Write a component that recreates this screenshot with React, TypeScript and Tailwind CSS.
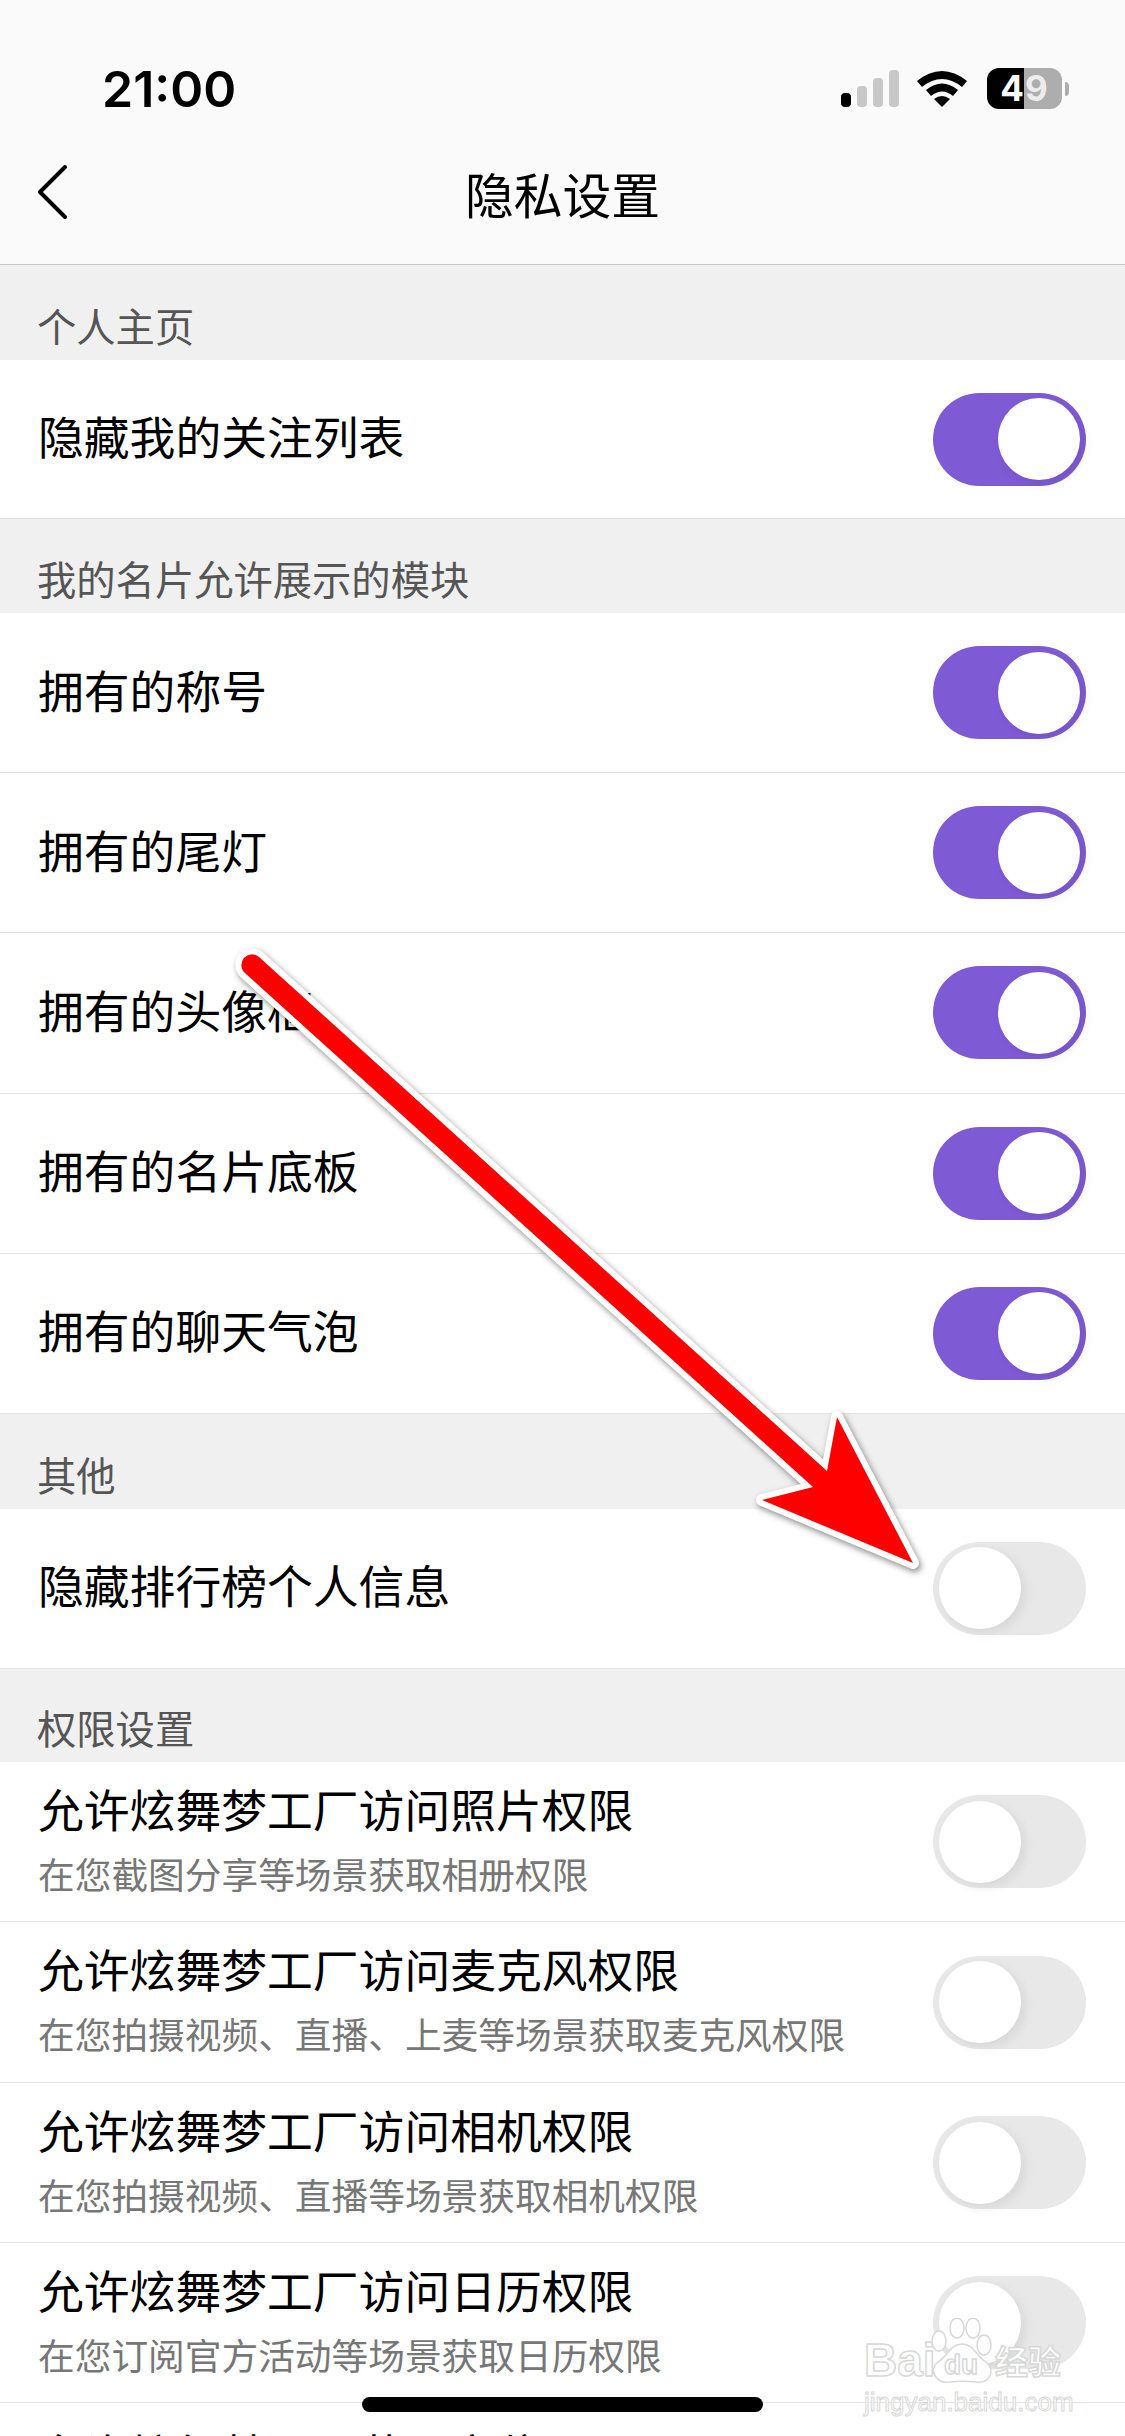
import React, { ReactElement } from 'react'

const font = { fontFamily: '"Noto Sans CJK SC", sans-serif' }

function Toggle({ on }: { on: boolean }): ReactElement {
  return (
    <div
      className={`flex h-[93px] w-[153px] shrink-0 items-center rounded-full px-[6px] ${
        on ? 'justify-end bg-[#7f5ad5]' : 'justify-start bg-[#e8e8e8]'
      }`}
    >
      <div className="h-[82px] w-[82px] rounded-full bg-white shadow-[4px_4px_12px_rgba(0,0,0,0.08)]" />
    </div>
  )
}

function SectionTitle({ title, height }: { title: string; height: string }): ReactElement {
  return (
    <div className={`flex items-end bg-[#f0f0f0] pb-[11px] pl-[37px] ${height}`}>
      <span className="text-[39.3px] leading-[48px] text-[#555555]">{title}</span>
    </div>
  )
}

interface RowProps {
  title: string
  sub?: string
  on?: boolean
  height?: string
  textPad?: string
}
function Row({ title, sub, on = false, height = 'h-[160.2px]', textPad = 'pb-[8px]' }: RowProps): ReactElement {
  return (
    <div className={`flex items-center justify-between border-b border-[#e4e4e4] bg-white pl-[38px] pr-[39px] ${height}`}>
      <div className={`flex flex-col ${textPad}`}>
        <span className="text-[45.8px] leading-[60px] text-black">{title}</span>
        {sub && <span className="mt-[12px] text-[36.7px] leading-[46px] text-[#777777]">{sub}</span>}
      </div>
      <Toggle on={on} />
    </div>
  )
}

function StatusIcons(): ReactElement {
  return (
    <div className="flex items-center">
      <svg width="60" height="40" viewBox="0 0 60 40" className="mt-[2px]">
        <rect x="0" y="23" width="10" height="14" rx="4" fill="#000" />
        <rect x="16" y="16" width="10" height="21" rx="4" fill="#c8c8c8" />
        <rect x="32" y="8" width="10" height="29" rx="4" fill="#c8c8c8" />
        <rect x="48" y="0" width="10" height="37" rx="4" fill="#c8c8c8" />
      </svg>
      <svg width="54" height="40" viewBox="0 0 54 40" className="ml-[15px]">
        <path d="M1 12 Q26 -8 51 12 L46 18 Q26 2 6 18 Z" fill="#000" />
        <path d="M10 21 Q26 8 42 21 L37 27 Q26 18 15 27 Z" fill="#000" />
        <path d="M18 30 Q26 24 34 30 L26 38 Z" fill="#000" />
      </svg>
      <div className="relative ml-[17px] flex h-[41px] w-[75px] items-center overflow-hidden rounded-[12px]">
        <div className="h-full w-[37px] bg-black" />
        <div className="h-full flex-1 bg-[#adadad]" />
        <div
          className="absolute inset-0 flex items-center justify-center text-[35px] font-bold tracking-[1px]"
          style={{ fontFamily: 'Inter, sans-serif' }}
        >
          <span className="text-white">4</span>
          <span className="text-[#ececec]">9</span>
        </div>
      </div>
      <div className="ml-[3px] h-[14px] w-[4px] rounded-r-full bg-[#adadad]" />
    </div>
  )
}

function Arrow(): ReactElement {
  return (
    <svg
      className="pointer-events-none absolute left-0 top-0 drop-shadow-[2px_3px_3px_rgba(0,0,0,0.45)]"
      width="1125"
      height="2436"
      viewBox="0 0 1125 2436"
    >
      <path
        d="M259 957 L827 1471 L837 1417 L913 1563 L762 1500 L813 1487 L245 973 A10.5 10.5 0 0 1 259 957 Z"
        fill="#ff0000"
        stroke="#ffffff"
        strokeWidth="12"
        strokeLinejoin="round"
        paintOrder="stroke"
      />
    </svg>
  )
}

const outline = '[-webkit-text-stroke:1.5px_#d8d8d8] text-white'

function Watermark(): ReactElement {
  return (
    <div className="pointer-events-none absolute left-[864px] top-[2318px] h-[100px] w-[205px]">
      <span
        className={`absolute left-0 top-[14px] text-[46px] font-bold leading-[56px] ${outline}`}
        style={{ fontFamily: '"Liberation Sans", sans-serif' }}
      >
        Bai
      </span>
      <svg className="absolute left-[60px] top-0" width="80" height="72" viewBox="0 0 80 72">
        <g fill="#ffffff" stroke="#d8d8d8" strokeWidth="1.5">
          <ellipse cx="33" cy="10" rx="7" ry="10" />
          <ellipse cx="49" cy="10" rx="7" ry="10" />
          <ellipse cx="15" cy="23" rx="7" ry="10" />
          <ellipse cx="60" cy="27" rx="7" ry="10" />
          <path d="M38 26 C26 26 24 38 14 44 C4 52 12 66 26 64 C34 63 44 63 52 64 C66 66 72 52 62 44 C52 38 50 26 38 26 Z" />
        </g>
      </svg>
      <span
        className={`absolute left-[80px] top-[30px] text-[28px] font-bold leading-[34px] ${outline}`}
        style={{ fontFamily: '"Liberation Sans", sans-serif' }}
      >
        du
      </span>
      <span className={`absolute left-[131px] top-[20px] text-[33px] font-bold leading-[44px] ${outline}`}>经验</span>
      <span
        className="absolute left-0 top-[68px] whitespace-nowrap text-[26px] leading-[32px] text-white [-webkit-text-stroke:1px_#d8d8d8]"
        style={{ fontFamily: '"Liberation Sans", sans-serif' }}
      >
        jingyan.baidu.com
      </span>
    </div>
  )
}

export default function App(): ReactElement {
  return (
    <div className="relative h-[2436px] w-[1125px] overflow-hidden bg-white" style={font}>
      <div className="h-[265px] border-b border-[#c6c6c6] bg-[#fafafa]">
        <div className="flex h-[134px] items-center justify-between pl-[102px] pr-[56px] pt-[43px]">
          <span className="text-[50px] font-semibold leading-none text-black" style={{ fontFamily: 'Inter, sans-serif' }}>
            21:00
          </span>
          <StatusIcons />
        </div>
        <div className="relative flex h-[124px] items-center justify-center pb-[6px]">
          <svg className="absolute left-[34px] top-[30px]" width="36" height="56" viewBox="0 0 36 56">
            <path d="M31 3 L6 28 L31 53" fill="none" stroke="#000" strokeWidth="4" strokeLinecap="round" strokeLinejoin="round" />
          </svg>
          <span className="text-[48.8px] leading-[60px] text-black">隐私设置</span>
        </div>
      </div>

      <SectionTitle title="个人主页" height="h-[95px]" />
      <Row title="隐藏我的关注列表" on height="h-[159px]" />

      <SectionTitle title="我的名片允许展示的模块" height="h-[94px]" />
      <Row title="拥有的称号" on />
      <Row title="拥有的尾灯" on />
      <Row title="拥有的头像框" on />
      <Row title="拥有的名片底板" on />
      <Row title="拥有的聊天气泡" on />

      <SectionTitle title="其他" height="h-[95px]" />
      <Row title="隐藏排行榜个人信息" height="h-[160px]" />

      <SectionTitle title="权限设置" height="h-[93px]" />
      <Row title="允许炫舞梦工厂访问照片权限" sub="在您截图分享等场景获取相册权限" height="h-[160.5px]" textPad="pb-[10px]" />
      <Row title="允许炫舞梦工厂访问麦克风权限" sub="在您拍摄视频、直播、上麦等场景获取麦克风权限" height="h-[160.5px]" textPad="pb-[10px]" />
      <Row title="允许炫舞梦工厂访问相机权限" sub="在您拍摄视频、直播等场景获取相机权限" height="h-[160.5px]" textPad="pb-[10px]" />
      <Row title="允许炫舞梦工厂访问日历权限" sub="在您订阅官方活动等场景获取日历权限" height="h-[159.5px]" textPad="pb-[10px]" />
      <Row title="允许炫舞梦工厂获取定位" height="h-[160.5px]" textPad="pb-[60px]" />

      <Arrow />
      <Watermark />
      <div className="absolute bottom-[24px] left-[362px] h-[15px] w-[401px] rounded-full bg-black" />
    </div>
  )
}
